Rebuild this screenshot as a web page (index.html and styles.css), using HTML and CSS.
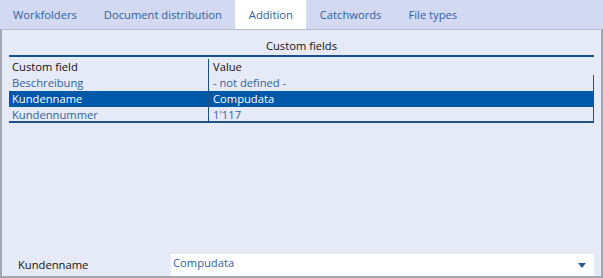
FILE: index.html
```html
<!DOCTYPE html>
<html>
  <head>
    <title>Addition</title>
    <link rel="stylesheet" href="styles.css">
  </head>
  <body>
    <div class="tabs">
      <div class="tab">Workfolders</div>
      <div class="tab">Document distribution</div>
      <div class="tab active">Addition</div>
      <div class="tab">Catchwords</div>
      <div class="tab">File types</div>
    </div>
    <div class="panel">
      <div class="section-title">Custom fields</div>
      <div class="grid">
        <div class="row head">
          <div class="cell">Custom field</div>
          <div class="cell value">Value</div>
        </div>
        <div class="row">
          <div class="cell">Beschreibung</div>
          <div class="cell value">- not defined -</div>
        </div>
        <div class="row selected">
          <div class="cell">Kundenname</div>
          <div class="cell value">Compudata</div>
        </div>
        <div class="row">
          <div class="cell">Kundennummer</div>
          <div class="cell value">1'117</div>
        </div>
      </div>
      <div class="spacer"></div>
      <div class="editor">
        <label class="editor-label">Kundenname</label>
        <div class="combo">
          <span>Compudata</span>
          <svg width="8" height="5" viewBox="0 0 8 5"><path d="M0 0h8L4 5z" fill="#1f5aa6"/></svg>
        </div>
      </div>
    </div>
  </body>
</html>
```
FILE: styles.css
```css
body {
  margin: 0;
  font-family: "Open Sans", "Noto Sans", sans-serif;
  font-size: 11.2px;
  background-color: #d3d9f0;
  height: 278px;
  display: flex;
  flex-direction: column;
}

.tabs {
  display: flex;
  height: 29px;
  flex-shrink: 0;
}

.tab {
  padding: 0 13.5px;
  line-height: 29px;
  color: #2d62a6;
}

.tab:first-child {
  padding-left: 13px;
}

.tab.active {
  background-color: #fff;
}

.panel {
  flex: 1;
  display: flex;
  flex-direction: column;
  background-color: #e6eaf6;
  border: 2px solid #a4a6ad;
  border-top: 1px solid #b7bccb;
}

.section-title {
  margin: 0 7px;
  padding-top: 8px;
  height: 17px;
  text-align: center;
  color: #111;
  border-bottom: 2px solid #1c5088;
  box-shadow: 0 1px 0 #d6f0ff;
}

.grid {
  margin: 2px 7px 0 7px;
}

.row {
  display: grid;
  grid-template-columns: 199px 1fr;
  height: 16px;
  line-height: 16px;
  color: #2d62a6;
}

.row:not(.head) {
  border-right: 1px solid #1c5088;
}

.row:last-child {
  border-bottom: 2px solid #1c5088;
  height: 14px;
}

.row.head {
  color: #111;
}

.row.selected {
  background-color: #0058a8;
  color: #fff;
}

.cell {
  padding-left: 3px;
  white-space: nowrap;
}

.cell.value {
  border-left: 1px solid #1c5088;
  padding-left: 4px;
}

.spacer {
  flex: 1;
}

.editor {
  display: flex;
  align-items: center;
  margin-right: 7px;
}

.editor-label {
  width: 153px;
  padding-left: 16px;
  margin-top: -2px;
  color: #111;
}

.combo {
  flex: 1;
  height: 22px;
  background-color: #fff;
  display: flex;
  align-items: center;
  justify-content: space-between;
  padding: 0 8px 0 2px;
  color: #2d62a6;
}

.combo span {
  margin-top: -5px;
}
```
